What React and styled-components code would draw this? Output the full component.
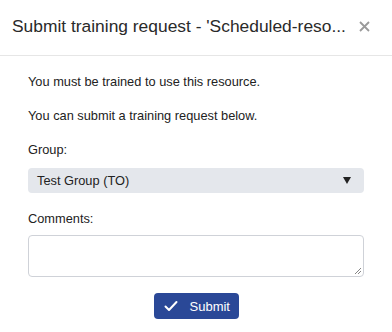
import React from "react";
import styled, { createGlobalStyle } from "styled-components";

const Global = createGlobalStyle`
  html, body { margin: 0; padding: 0; background: #fff; }
  body { font-family: "Liberation Sans", Arial, sans-serif; color: #222; }
  * { box-sizing: border-box; }
`;

const Dialog = styled.div`
  width: 392px;
  height: 332px;
  background: #fff;
  display: flex;
  flex-direction: column;
`;

const Header = styled.div`
  height: 56px;
  border-bottom: 1px solid #e6e6e6;
  display: flex;
  align-items: center;
  padding: 0 12px 2px 12px;
  justify-content: space-between;
`;

const Title = styled.div`
  font-size: 17.4px;
  color: #2a2a2a;
  white-space: nowrap;
`;

const Close = styled.button`
  border: none;
  background: none;
  padding: 0;
  margin-right: 10px;
  width: 12px;
  height: 12px;
  display: flex;
  align-items: center;
  justify-content: center;
  color: #9a9a9a;
  cursor: pointer;
`;

const Body = styled.div`
  padding: 18px 28px 0 28px;
  display: flex;
  flex-direction: column;
`;

const Text = styled.p`
  margin: 0 0 ${(p) => p.$mb || 18}px 0;
  font-size: 12.8px;
  line-height: 16px;
  color: #222;
`;

const Select = styled.div`
  height: 25px;
  background: #e4e7ec;
  border-radius: 4px;
  display: flex;
  align-items: center;
  justify-content: space-between;
  padding: 0 13px 0 9px;
  font-size: 12.8px;
  color: #222;
  margin-bottom: 18px;
`;

const Arrow = styled.span`
  width: 0;
  height: 0;
  border-left: 4.5px solid transparent;
  border-right: 4.5px solid transparent;
  border-top: 7px solid #222;
`;

const TextArea = styled.div`
  position: relative;
  height: 42px;
  border: 1px solid #cfd2d8;
  border-radius: 4px;
`;

const Grip = styled.svg`
  position: absolute;
  right: 1px;
  bottom: 1px;
`;

const Actions = styled.div`
  display: flex;
  justify-content: center;
  margin-top: 16px;
`;

const Button = styled.button`
  height: 26px;
  width: 85px;
  background: #2a4897;
  border: none;
  border-radius: 4px;
  color: #fff;
  font-family: "Liberation Sans", Arial, sans-serif;
  font-size: 13px;
  display: flex;
  align-items: center;
  padding: 0 0 0 10px;
  gap: 12px;
`;

export default function App() {
  return (
    <>
      <Global />
      <Dialog>
        <Header>
          <Title>Submit training request - 'Scheduled-reso...</Title>
          <Close aria-label="Close">
            <svg width="11" height="11" viewBox="0 0 11 11">
              <path d="M1 1 L10 10 M10 1 L1 10" stroke="currentColor" strokeWidth="1.8" />
            </svg>
          </Close>
        </Header>
        <Body>
          <Text>You must be trained to use this resource.</Text>
          <Text>You can submit a training request below.</Text>
          <Text $mb={10}>Group:</Text>
          <Select>
            <span>Test Group (TO)</span>
            <Arrow />
          </Select>
          <Text $mb={8}>Comments:</Text>
          <TextArea>
            <Grip width="8" height="8" viewBox="0 0 8 8">
              <path d="M1 7 L7 1 M4 7 L7 4" stroke="#666" strokeWidth="0.8" />
            </Grip>
          </TextArea>
          <Actions>
            <Button>
              <svg width="14" height="12" viewBox="0 0 14 12">
                <path d="M1.5 6.5 L5 10 L12.5 2" fill="none" stroke="#fff" strokeWidth="2" strokeLinecap="round" strokeLinejoin="round" />
              </svg>
              Submit
            </Button>
          </Actions>
        </Body>
      </Dialog>
    </>
  );
}
